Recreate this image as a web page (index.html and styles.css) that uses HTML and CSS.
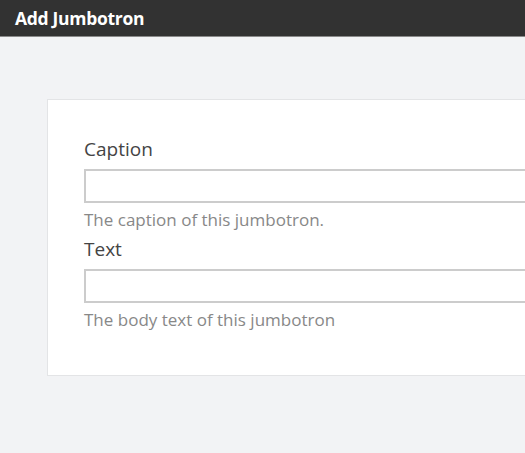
FILE: index.html
```html
<!DOCTYPE html>
<html>
<head>
<meta charset="utf-8">
<link rel="stylesheet" href="styles.css">
</head>
<body>
<header class="topbar">Add Jumbotron</header>
<main class="main">
  <section class="card">
    <div class="field">
      <label class="label">Caption</label>
      <input class="input" type="text">
      <div class="help">The caption of this jumbotron.</div>
    </div>
    <div class="field">
      <label class="label">Text</label>
      <input class="input" type="text">
      <div class="help">The body text of this jumbotron</div>
    </div>
  </section>
</main>
</body>
</html>
```
FILE: styles.css
```css
html, body {
  margin: 0;
  padding: 0;
  background: #f2f3f5;
  font-family: "Open Sans", "Noto Sans", sans-serif;
  overflow: hidden;
}
.topbar {
  height: 36px;
  background: #323232;
  border-bottom: 1px solid #8a8a8a;
  color: #ffffff;
  font-weight: 700;
  font-size: 17.5px;
  line-height: 36px;
  padding-left: 15px;
  letter-spacing: -0.3px;
}
.main {
  padding: 62px 0 0 47px;
  overflow: hidden;
}
.card {
  background: #ffffff;
  border: 1px solid #e3e4e6;
  border-right: none;
  padding: 37px 0 44px 36px;
  width: 600px;
}
.field {
  display: flex;
  flex-direction: column;
}
.field + .field {
  margin-top: 6px;
}
.label {
  font-size: 19px;
  line-height: 24px;
  color: #444444;
}
.input {
  margin: 8px 0 0 0;
  height: 34px;
  box-sizing: border-box;
  border: 2px solid #cccccc;
  background: #ffffff;
  padding: 0 8px;
  font-size: 16px;
  width: 100%;
}
.help {
  margin-top: 6px;
  font-size: 17px;
  line-height: 22px;
  color: #888888;
}
```
